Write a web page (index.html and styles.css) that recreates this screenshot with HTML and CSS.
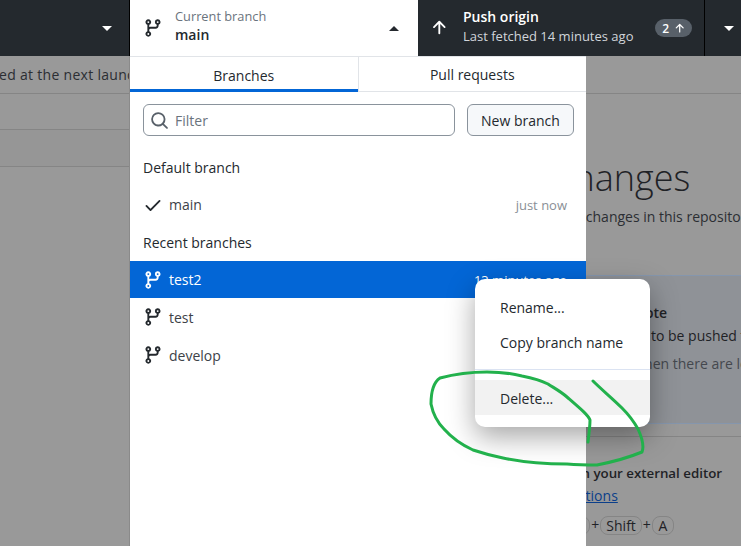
FILE: index.html
```html
<!DOCTYPE html>
<html>
  <head>
    <meta charset="UTF-8" />
    <title>Branches</title>
    <link rel="stylesheet" href="styles.css">
  </head>
  <body>
    <svg class="defs" width="0" height="0">
      <symbol id="git-branch" viewBox="0 0 16 16">
        <path fill-rule="evenodd" d="M9.5 3.25a2.25 2.25 0 1 1 3 2.122V6A2.5 2.5 0 0 1 10 8.5H6a1 1 0 0 0-1 1v1.128a2.251 2.251 0 1 1-1.5 0V5.372a2.25 2.25 0 1 1 1.5 0v1.836A2.493 2.493 0 0 1 6 7h4a1 1 0 0 0 1-1v-.628A2.25 2.25 0 0 1 9.5 3.25Zm-6 0a.75.75 0 1 0 1.5 0 .75.75 0 0 0-1.5 0Zm8.25-.75a.75.75 0 1 0 0 1.5.75.75 0 0 0 0-1.5ZM4.25 12a.75.75 0 1 0 0 1.5.75.75 0 0 0 0-1.5Z" />
      </symbol>
      <symbol id="arrow-up" viewBox="0 0 16 16">
        <path d="M3.47 7.78a.75.75 0 0 1 0-1.06l4.25-4.25a.75.75 0 0 1 1.06 0l4.25 4.25a.751.751 0 0 1-.018 1.042.751.751 0 0 1-1.042.018L9 4.81v7.44a.75.75 0 0 1-1.5 0V4.81L4.53 7.78a.75.75 0 0 1-1.06 0Z" />
      </symbol>
    </svg>

    <header class="toolbar">
      <div class="tool tool-repo"><span class="caret-down"></span></div>
      <div class="tool tool-branch">
        <svg class="icon branch-icon"><use href="#git-branch" /></svg>
        <div class="tool-text">
          <span class="tool-label">Current branch</span>
          <span class="tool-value">main</span>
        </div>
        <span class="caret-up"></span>
      </div>
      <div class="tool tool-push">
        <svg class="icon push-icon"><use href="#arrow-up" /></svg>
        <div class="tool-text">
          <span class="push-title">Push origin</span>
          <span class="push-sub">Last fetched 14 minutes ago</span>
        </div>
        <span class="badge">2 <svg class="badge-icon"><use href="#arrow-up" /></svg></span>
      </div>
      <div class="tool tool-more"><span class="caret-down"></span></div>
    </header>

    <main class="content">
      <section class="side">
        <div class="banner">Updated will be installed at the next launch</div>
        <div class="side-row"></div>
        <div class="side-row side-row-dark"></div>
      </section>

      <section class="popover">
        <div class="tabs">
          <div class="tab tab-active">Branches</div>
          <div class="tab">Pull requests</div>
        </div>
        <div class="filter-row">
          <div class="filter">
            <svg class="search-icon" viewBox="0 0 16 16"><path d="M10.68 11.74a6 6 0 0 1-7.922-8.982 6 6 0 0 1 8.982 7.922l3.04 3.04a.749.749 0 0 1-.326 1.275.749.749 0 0 1-.734-.215ZM11.5 7a4.499 4.499 0 1 0-8.997 0A4.499 4.499 0 0 0 11.5 7Z" /></svg>
            <span>Filter</span>
          </div>
          <button class="new-branch">New branch</button>
        </div>
        <h3 class="group-title">Default branch</h3>
        <div class="branch branch-current">
          <svg class="icon" viewBox="0 0 16 16"><path d="M13.78 4.22a.75.75 0 0 1 0 1.06l-7.25 7.25a.75.75 0 0 1-1.06 0L2.22 9.28a.751.751 0 0 1 .018-1.042.751.751 0 0 1 1.042-.018L6 10.94l6.72-6.72a.75.75 0 0 1 1.06 0Z" /></svg>
          <span class="branch-name">main</span>
          <span class="branch-time">just now</span>
        </div>
        <h3 class="group-title">Recent branches</h3>
        <div class="branch branch-selected">
          <svg class="icon"><use href="#git-branch" /></svg>
          <span class="branch-name">test2</span>
          <span class="branch-time">13 minutes ago</span>
        </div>
        <div class="branch">
          <svg class="icon"><use href="#git-branch" /></svg>
          <span class="branch-name">test</span>
        </div>
        <div class="branch">
          <svg class="icon"><use href="#git-branch" /></svg>
          <span class="branch-name">develop</span>
        </div>
      </section>

      <section class="pane">
        <div class="pane-banner"></div>
        <div class="pane-inner">
          <h1 class="pane-title">No local changes</h1>
          <p class="pane-text">There are no uncommitted changes in this repository</p>
          <div class="card">
            <h4>Push commits to the origin remote</h4>
            <p>You have 2 local commits waiting to be pushed to GitHub.</p>
            <p class="card-muted">Always available in the toolbar when there are local commits</p>
          </div>
          <div class="editor">
            <h4>Open the repository in your external editor</h4>
            <p>Select your editor in <a href="#">Options</a></p>
            <p class="keys">Repository menu or <kbd>Ctrl</kbd>+<kbd>Shift</kbd>+<kbd class="key-single">A</kbd></p>
          </div>
        </div>
      </section>
    </main>

    <div class="menu">
      <div class="menu-item">Rename...</div>
      <div class="menu-item">Copy branch name</div>
      <div class="menu-sep"></div>
      <div class="menu-item menu-item-hover">Delete...</div>
    </div>

    <svg class="scribble" width="741" height="546" viewBox="0 0 741 546">
      <path d="M588 442 C589 434 590 426 590 420 C588 415 582 410 567 397 C560 391 554 388 548 384 C540 380 532 378 522 376 C510 373 498 372 487 372 C470 372 455 374 440 378 C434 382 431 392 431 404 C433 414 438 423 444 429 C452 438 462 445 473 450 C485 454 493 456 503 458 C522 462 545 464 567 464 C580 465 590 465 597 465 C612 462 630 457 642 452 C644 447 643 440 638 429 C633 420 628 414 622 408 C612 398 602 390 593 381" />
    </svg>
  </body>
</html>
```

FILE: styles.css
```css
* {
  box-sizing: border-box;
}
html,
body {
  height: 100%;
}
body {
  margin: 0;
  font-family: "Open Sans", "Noto Sans", sans-serif;
  font-size: 14px;
  color: #24292e;
  background-color: #999;
  display: flex;
  flex-direction: column;
  overflow: hidden;
}
h1,
h3,
h4,
p {
  margin: 0;
}
.defs {
  position: absolute;
}
.icon {
  width: 20px;
  height: 20px;
  flex: none;
  fill: currentColor;
}

/* Toolbar */
.toolbar {
  display: flex;
  height: 56px;
  flex: none;
  background-color: #24292e;
  color: #fff;
}
.tool {
  display: flex;
  align-items: center;
  height: 100%;
}
.tool-repo {
  width: 130px;
  justify-content: flex-end;
  padding-right: 17px;
  border-right: 1px solid #000;
}
.tool-branch {
  width: 288px;
  background-color: #fff;
  color: #24292e;
  padding: 0 19px 0 13px;
}
.branch-icon {
  margin-right: 12px;
}
.tool-text {
  display: flex;
  flex-direction: column;
  flex: 1;
  padding-bottom: 4px;
}
.tool-label {
  font-size: 12.8px;
  line-height: 17px;
  color: #6a737d;
}
.tool-value {
  font-size: 14px;
  font-weight: 600;
  line-height: 19px;
}
.tool-push {
  width: 287px;
  padding: 0 12px 0 11px;
  border-right: 1px solid #000;
}
.push-icon {
  margin-right: 14px;
}
.push-title {
  font-size: 14px;
  font-weight: 600;
  line-height: 20px;
}
.push-sub {
  font-size: 13px;
  line-height: 19px;
  color: #d1d5da;
}
.badge {
  display: flex;
  align-items: center;
  gap: 4px;
  height: 18px;
  padding: 0 6px 0 7px;
  border-radius: 9px;
  background-color: #586069;
  font-size: 12px;
  font-weight: 600;
}
.badge-icon {
  width: 13px;
  height: 13px;
  fill: #fff;
}
.tool-more {
  flex: 1;
  justify-content: center;
  padding-left: 11px;
}
.caret-down,
.caret-up {
  width: 0;
  height: 0;
  border-left: 5px solid transparent;
  border-right: 5px solid transparent;
}
.caret-down {
  border-top: 5px solid #fff;
}
.caret-up {
  border-bottom: 5px solid #24292e;
}

/* Dimmed page behind the dropdown */
.content {
  display: flex;
  flex: 1;
  min-height: 0;
}
.side {
  width: 130px;
  flex: none;
  border-right: 1px solid #8a8a8a;
  overflow: hidden;
}
.banner {
  height: 38px;
  display: flex;
  align-items: center;
  justify-content: flex-end;
  white-space: nowrap;
  margin-right: -14px;
  letter-spacing: 0.3px;
  color: #2b2e33;
  border-bottom: 1px solid #858585;
}
.side-row {
  height: 36px;
  border-bottom: 1px solid #858585;
}
.side-row-dark {
  height: 37px;
  background-color: #969696;
}
.pane {
  flex: 1;
  min-width: 0;
  overflow: hidden;
}
.pane-banner {
  height: 38px;
  border-bottom: 1px solid #858585;
}
.pane-inner {
  width: 600px;
  margin-left: -169px;
  padding-top: 56px;
  color: #1f2226;
}
.pane-title {
  font-size: 36px;
  font-weight: 300;
  line-height: 56px;
}
.pane-text {
  line-height: 20px;
  margin: 1px 0 0 -10px;
  color: #2b2e33;
}
.card {
  margin-top: 48px;
  height: 149px;
  padding: 27px 0 0 15px;
  background-color: #8f9297;
  border-top: 1px solid #8596ad;
  border-bottom: 1px solid #8596ad;
}
.card h4,
.editor h4 {
  font-size: 14px;
  font-weight: 600;
  line-height: 20px;
}
.card p {
  line-height: 22px;
  margin-top: 2px;
}
.card .card-muted {
  color: #44484e;
  margin: 6px 0 0 0;
}
.editor {
  margin-top: 12px;
  padding: 26px 0 0 15px;
  border-top: 1px solid #858585;
}
.editor h4 {
  font-size: 13.3px;
  margin-left: 13px;
}
.editor a {
  color: #0b3f8a;
}
.editor p {
  line-height: 22px;
  margin-top: 2px;
}
.editor .keys {
  margin: 7px 0 0 -7px;
  display: flex;
  align-items: center;
  gap: 1px;
}
kbd {
  font-family: inherit;
  font-size: 14px;
  line-height: 17px;
  padding: 0 5px;
  border: 1px solid #858585;
  border-radius: 8px;
}
.key-single {
  min-width: 22px;
  text-align: center;
}

/* Branch dropdown */
.popover {
  width: 456px;
  flex: none;
  background-color: #fff;
  border-top: 1px solid #e1e4e8;
}
.tabs {
  display: flex;
  height: 35px;
  border-bottom: 1px solid #e1e4e8;
}
.tab {
  flex: 1;
  display: flex;
  align-items: center;
  justify-content: center;
  padding-top: 1px;
}
.tab-active {
  border-right: 1px solid #e1e4e8;
  box-shadow: inset 0 -3px 0 #0366d6;
  height: 35px;
}
.filter-row {
  display: flex;
  gap: 12px;
  padding: 12px 12px 0 13px;
}
.filter {
  flex: 1;
  height: 32px;
  display: flex;
  align-items: center;
  gap: 6px;
  padding-left: 6px;
  color: #6a737d;
  border: 1px solid #8a939c;
  border-radius: 6px;
}
.search-icon {
  width: 19px;
  height: 19px;
  fill: #586069;
}
.new-branch {
  width: 107px;
  height: 32px;
  font: inherit;
  color: #24292e;
  background-color: #f6f8fa;
  border: 1px solid #8a939c;
  border-radius: 6px;
  padding: 0;
}
.group-title {
  height: 37px;
  margin-top: 13px;
  padding-left: 13px;
  font-size: 14px;
  font-weight: 500;
  line-height: 37px;
  color: #24292e;
}
.branch + .group-title {
  margin-top: 0;
}
.branch {
  display: flex;
  align-items: center;
  height: 38px;
  padding: 0 19px 0 13px;
  color: #24292e;
}
.branch-current {
  height: 37px;
  margin-bottom: 1px;
}
.branch-name {
  flex: 1;
  margin-left: 6px;
  color: #3d4248;
}
.branch-time {
  font-size: 13px;
  color: #8a8f96;
}
.branch-selected,
.branch-selected .branch-name,
.branch-selected .branch-time {
  color: #fff;
}
.branch-selected {
  height: 37px;
  background-color: #0366d6;
}

/* Context menu */
.menu {
  position: absolute;
  left: 475px;
  top: 279px;
  width: 175px;
  padding: 11px 0 12px;
  background-color: #fff;
  border-radius: 10px;
  box-shadow: 0 10px 28px rgba(0, 0, 0, 0.35);
}
.menu-item {
  height: 35px;
  line-height: 35px;
  padding-left: 25px;
  color: #24292e;
}
.menu-sep {
  height: 1px;
  margin: 9px 0 10px;
  background-color: #dbe3f2;
}
.menu-item-hover {
  line-height: 37px;
  background-color: #f2f2f2;
}

/* Hand drawn circle on top of the screenshot */
.scribble {
  position: absolute;
  left: 0;
  top: 0;
  fill: none;
  stroke: #22b14c;
  stroke-width: 3;
  stroke-linecap: round;
  stroke-linejoin: round;
}
```
